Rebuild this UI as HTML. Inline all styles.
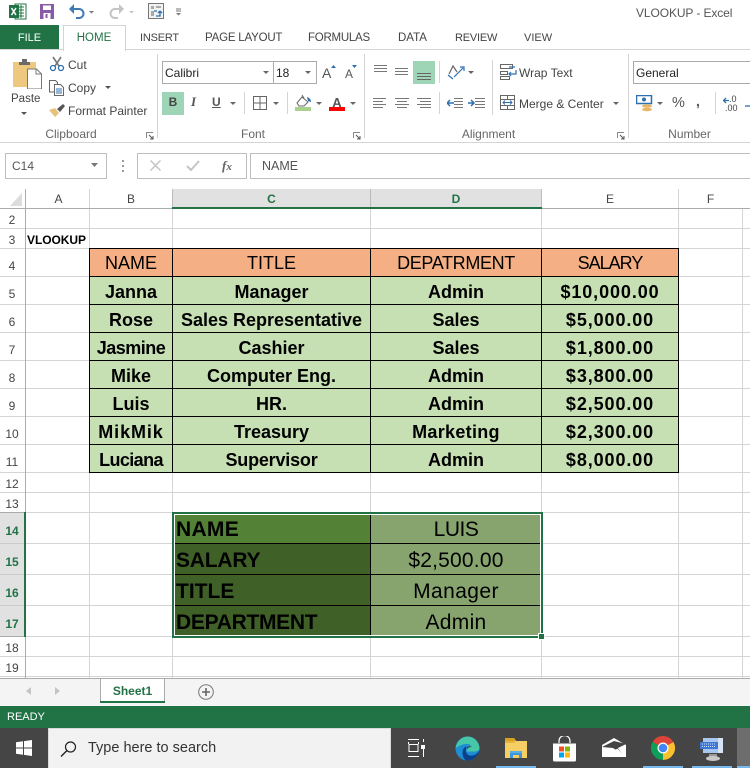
<!DOCTYPE html>
<html><head><meta charset="utf-8"><style>
html,body{margin:0;padding:0;background:#fff}
#p{position:relative;width:750px;height:768px;overflow:hidden;background:#fff;font-family:"Liberation Sans",sans-serif;color:#444;font-size:12px}
#p div,#p svg{position:absolute}
.t{white-space:nowrap;line-height:16px}
.c{text-align:center}
.h{background:#d4d4d4}
.b{background:#000}
.rn{left:0;width:24px;text-align:center;font-size:12px;color:#444;white-space:nowrap}
.d{font-weight:bold;font-size:18px;color:#000;text-align:center;white-space:nowrap;line-height:30px;height:28px}
.s{letter-spacing:.9px}
.hd{font-size:18px;color:#000;text-align:center;white-space:nowrap;line-height:28px;height:28px}
.sl{font-weight:bold;font-size:21px;color:#000;left:176px;white-space:nowrap;line-height:32px}
.sr{font-size:21px;color:#000;left:371px;width:170px;text-align:center;white-space:nowrap;line-height:32px}
.sep{width:1px;background:#d4d4d4}
</style></head><body><div id="p">

<!-- quick access -->
<svg style="left:9px;top:3px" width="18" height="17" viewBox="0 0 18 17"><rect x="6" y="1" width="11" height="15" fill="#fff" stroke="#217346"/><path d="M9 4h6M9 7h6M9 10h6M9 13h6M12 2v13" stroke="#217346"/><rect x="0" y="2" width="10" height="13" fill="#217346"/><path d="M2.500 5l4.500 7M7 5l-4.500 7" stroke="#fff" stroke-width="1.500"/></svg>
<svg style="left:40px;top:4px" width="14" height="15" viewBox="0 0 14 15"><rect width="14" height="15" fill="#8a5aa8"/><rect x="3" y="1.500" width="8" height="4.500" fill="#fff"/><rect x="3.500" y="9" width="7" height="6" fill="#fff"/><rect x="5.500" y="10" width="2" height="4" fill="#8a5aa8"/></svg>
<svg style="left:68px;top:3px" width="28" height="16" viewBox="0 0 28 16"><path d="M3 6h8a4.500 4.500 0 0 1 0 9H8" fill="none" stroke="#3f7ab5" stroke-width="2"/><path d="M1 6l5-5v10z" fill="#3f7ab5"/><path d="M21 8h5l-2.500 2.500z" fill="#777"/></svg>
<svg style="left:108px;top:3px" width="28" height="16" viewBox="0 0 28 16"><path d="M14 6H7a4.500 4.500 0 0 0 0 9h3" fill="none" stroke="#c4c4c4" stroke-width="2"/><path d="M16 6l-5-5v10z" fill="#c4c4c4"/><path d="M21 8h5l-2.500 2.500z" fill="#c4c4c4"/></svg>
<svg style="left:148px;top:3px" width="17" height="17" viewBox="0 0 17 17"><rect x=".5" y=".5" width="15" height="15" fill="#f2f2f2" stroke="#777"/><path d="M3 3h3v3H3zM8 3h5v2H8zM3 8h3v5H3z" fill="#aaa"/><path d="M8 13h4V9M12 8l-2 2M12 8l2 2M6 8h3" fill="none" stroke="#2d6fb0" stroke-width="1.300"/></svg>
<svg style="left:175px;top:8px" width="8" height="8" viewBox="0 0 8 8"><path d="M1 1h5M1 3h5" stroke="#777"/><path d="M1 5h5L3.500 7.500z" fill="#777"/></svg>
<div class="t" style="left:636px;top:5px;color:#555;letter-spacing:-.1px">VLOOKUP - Excel</div>

<!-- tabs -->
<div style="left:0;top:25px;width:59px;height:25px;background:#217346"></div>
<div class="t c" style="left:0;top:30px;width:59px;color:#fff;font-size:11px">FILE</div>
<div style="left:0;top:49px;width:750px;height:1px;background:#d4d4d4"></div>
<div style="left:63px;top:25px;width:61px;height:25px;background:#fff;border:1px solid #d4d4d4;border-bottom:0"></div>
<div class="t c" style="left:63px;top:30px;width:62px;color:#217346;font-size:11.500px">HOME</div>
<div class="t" style="left:140px;top:30px;font-size:11px;letter-spacing:-.2px">INSERT</div>
<div class="t" style="left:205px;top:30px;font-size:11.500px;letter-spacing:-.2px">PAGE LAYOUT</div>
<div class="t" style="left:308px;top:30px;font-size:11.500px;letter-spacing:-.25px">FORMULAS</div>
<div class="t" style="left:398px;top:30px;font-size:11.500px">DATA</div>
<div class="t" style="left:455px;top:30px;font-size:11px;letter-spacing:-.2px">REVIEW</div>
<div class="t" style="left:524px;top:30px;font-size:11px">VIEW</div>

<!-- ribbon -->
<div style="left:0;top:142px;width:750px;height:1px;background:#d4d4d4"></div>
<div class="sep" style="left:157px;top:54px;height:84px"></div>
<div class="sep" style="left:364px;top:54px;height:84px"></div>
<div class="sep" style="left:628px;top:54px;height:84px"></div>

<!-- clipboard -->
<svg style="left:12px;top:58px" width="30" height="31" viewBox="0 0 30 31"><path d="M1 4h23v25H1z" fill="#edc87e"/><path d="M7 4h11v3H7zM10 1h5v3h-5z" fill="#6a6a6a"/><path d="M15.500 11h9l5 5v15h-14z" fill="#fff" stroke="#777"/><path d="M24 11v5h5" fill="none" stroke="#777"/></svg>
<div class="t" style="left:11px;top:91px;color:#444;font-size:11.500px">Paste</div>
<svg style="left:21px;top:112px" width="7" height="5"><path d="M0 0h6L3 3z" fill="#555"/></svg>
<svg style="left:49px;top:56px" width="17" height="16" viewBox="0 0 17 16"><path d="M4 1l6 9M12 1L6 10" stroke="#777" stroke-width="1.600"/><circle cx="4" cy="12" r="2.500" fill="none" stroke="#2d6fb0" stroke-width="1.300"/><circle cx="12" cy="12" r="2.500" fill="none" stroke="#2d6fb0" stroke-width="1.300"/></svg>
<div class="t" style="left:68px;top:57px">Cut</div>
<svg style="left:49px;top:80px" width="16" height="16" viewBox="0 0 16 16"><path d="M.5.500h6l2 2V12H.500z" fill="#fff" stroke="#666"/><path d="M5.500 4.500h6l3 3v8h-9z" fill="#fff" stroke="#666"/><path d="M7 9h6M7 11h6M7 13h6" stroke="#2d6fb0"/></svg>
<div class="t" style="left:68px;top:80px">Copy</div>
<svg style="left:105px;top:86px" width="7" height="5"><path d="M0 0h6L3 3z" fill="#555"/></svg>
<svg style="left:49px;top:103px" width="17" height="15" viewBox="0 0 17 15"><path d="M0 7l6-2 4 5-4 4z" fill="#e8c27a"/><path d="M8 6l6-5 2 2-5 6z" fill="#555"/></svg>
<div class="t" style="left:68px;top:103px">Format Painter</div>
<div class="t c" style="left:0;top:126px;width:142px;color:#666">Clipboard</div>
<svg style="left:146px;top:132px" width="8" height="8" viewBox="0 0 8 8"><path d="M.5 6V.500H7" fill="none" stroke="#888"/><path d="M3 3l4 4M7 4v3H4" fill="none" stroke="#555"/></svg>

<!-- font -->
<div style="left:162px;top:61px;width:110px;height:21px;border:1px solid #ababab"></div>
<div style="left:273px;top:61px;width:42px;height:21px;border:1px solid #ababab"></div>
<div class="t" style="left:165px;top:65px;color:#222;font-size:12px">Calibri</div>
<div class="t" style="left:276px;top:65px;color:#222;font-size:12px">18</div>
<svg style="left:263px;top:71px" width="7" height="5"><path d="M0 0h6L3 3z" fill="#666"/></svg>
<svg style="left:305px;top:71px" width="7" height="5"><path d="M0 0h6L3 3z" fill="#666"/></svg>
<div class="t" style="left:322px;top:65px;font-size:14px;color:#555">A</div>
<svg style="left:331px;top:65px" width="5" height="3"><path d="M0 3h5L2.500 0z" fill="#2d6fb0"/></svg>
<div class="t" style="left:345px;top:66px;font-size:12px;color:#555">A</div>
<svg style="left:352px;top:65px" width="5" height="3"><path d="M0 0h5L2.500 3z" fill="#2d6fb0"/></svg>
<div style="left:162px;top:92px;width:22px;height:23px;background:#9fd5b7"></div>
<div class="t c" style="left:162px;top:94px;width:22px;font-weight:bold;font-size:12px;color:#444">B</div>
<div class="t" style="left:191px;top:94px;font-style:italic;font-family:'Liberation Serif',serif;font-weight:bold;font-size:13px;color:#555">I</div>
<div class="t" style="left:212px;top:94px;font-weight:bold;font-size:12px;color:#555;text-decoration:underline">U</div>
<svg style="left:230px;top:102px" width="7" height="5"><path d="M0 0h6L3 3z" fill="#666"/></svg>
<div class="sep" style="left:244px;top:92px;height:22px"></div>
<svg style="left:253px;top:96px" width="14" height="14"><path d="M.5.500h13v13H.500zM7 .5v13M.5 7h13" fill="none" stroke="#666"/></svg>
<svg style="left:273px;top:102px" width="7" height="5"><path d="M0 0h6L3 3z" fill="#666"/></svg>
<div class="sep" style="left:287px;top:92px;height:22px"></div>
<svg style="left:295px;top:94px" width="17" height="18" viewBox="0 0 17 18"><path d="M2 9l5-6 6 5-4 4H4z" fill="#fff" stroke="#666"/><path d="M7 1l2 3" stroke="#666"/><path d="M12 3c3 1 4 3 4 5l-3-1z" fill="#2d6fb0"/><rect y="13" width="16" height="4" fill="#a9d18e"/></svg>
<svg style="left:316px;top:102px" width="7" height="5"><path d="M0 0h6L3 3z" fill="#666"/></svg>
<div class="t c" style="left:329px;top:95px;width:16px;font-weight:bold;font-size:13px;color:#555">A</div>
<div style="left:329px;top:107px;width:16px;height:4px;background:#f00"></div>
<svg style="left:350px;top:102px" width="7" height="5"><path d="M0 0h6L3 3z" fill="#666"/></svg>
<div class="t c" style="left:158px;top:126px;width:190px;color:#666">Font</div>
<svg style="left:353px;top:132px" width="8" height="8" viewBox="0 0 8 8"><path d="M.5 6V.500H7" fill="none" stroke="#888"/><path d="M3 3l4 4M7 4v3H4" fill="none" stroke="#555"/></svg>

<!-- alignment -->
<svg style="left:374px;top:65px" width="38" height="12" viewBox="0 0 38 12"><path d="M0 .500h13M0 3.500h13M0 6.500h13M21 3.500h13M21 6.500h13M21 9.500h13" stroke="#777"/></svg>
<div style="left:413px;top:61px;width:22px;height:23px;background:#9fd5b7"></div>
<svg style="left:417px;top:72px" width="14" height="9"><path d="M0 1.500h14M0 4.500h14M0 7.500h14" stroke="#666"/></svg>
<div class="sep" style="left:439px;top:61px;height:22px"></div>
<svg style="left:447px;top:63px" width="18" height="18" viewBox="0 0 18 18"><path d="M2 11l4-8 4 6" fill="none" stroke="#666" stroke-width="1.200"/><path d="M1 12l5 4M7 14l9-9M13 4h4v4" fill="none" stroke="#2d6fb0" stroke-width="1.200"/></svg>
<svg style="left:468px;top:71px" width="7" height="5"><path d="M0 0h6L3 3z" fill="#666"/></svg>
<svg style="left:373px;top:97px" width="60" height="12" viewBox="0 0 60 12"><path d="M0 1.500h13M0 4.500h10M0 7.500h13M0 10.500h10M22 1.500h14M24 4.500h10M22 7.500h14M24 10.500h10M44 1.500h14M47 4.500h11M44 7.500h14M47 10.500h11" stroke="#777"/></svg>
<div class="sep" style="left:439px;top:92px;height:22px"></div>
<svg style="left:447px;top:97px" width="38" height="12" viewBox="0 0 38 12"><path d="M7 1.500h9M7 4.500h9M7 7.500h9M7 10.500h9M28 1.500h10M28 4.500h10M28 7.500h10M28 10.500h10" stroke="#777"/><path d="M0 6h7M3 3L0 6l3 3M21 6h6M24 3l3 3-3 3" fill="none" stroke="#2d6fb0" stroke-width="1.500"/></svg>
<div class="sep" style="left:492px;top:60px;height:55px"></div>
<svg style="left:500px;top:64px" width="17" height="16" viewBox="0 0 17 16"><path d="M.5.500h12v4H.500zM.5 7.500h7v3h-7zM.5 12.500h9v3h-9z" fill="#fff" stroke="#666"/><path d="M16 6v4h-7M11 8l-2 2 2 2M9 3h6" fill="none" stroke="#2d6fb0" stroke-width="1.200"/></svg>
<div class="t" style="left:519px;top:65px">Wrap Text</div>
<svg style="left:500px;top:95px" width="15" height="15" viewBox="0 0 15 15"><path d="M.5.500h14v14H.500zM.5 4.500h14M.5 10.500h14M7.500.5v4M7.500 10.500v4" fill="none" stroke="#666"/><path d="M3 7.500h9M5 5.500l-2 2 2 2M10 5.500l2 2-2 2" fill="none" stroke="#2d6fb0"/></svg>
<div class="t" style="left:519px;top:96px">Merge &amp; Center</div>
<svg style="left:613px;top:102px" width="7" height="5"><path d="M0 0h6L3 3z" fill="#666"/></svg>
<div class="t c" style="left:365px;top:126px;width:247px;color:#666">Alignment</div>
<svg style="left:617px;top:132px" width="8" height="8" viewBox="0 0 8 8"><path d="M.5 6V.500H7" fill="none" stroke="#888"/><path d="M3 3l4 4M7 4v3H4" fill="none" stroke="#555"/></svg>

<!-- number -->
<div style="left:633px;top:61px;width:130px;height:21px;border:1px solid #ababab"></div>
<div class="t" style="left:636px;top:65px;color:#222;font-size:12px">General</div>
<svg style="left:636px;top:95px" width="19" height="17" viewBox="0 0 19 17"><path d="M.5.500h15v8H.500z" fill="#fff" stroke="#2d6fb0" stroke-width="1.500"/><circle cx="8" cy="4.500" r="2" fill="#2d6fb0"/><ellipse cx="11" cy="11" rx="5" ry="1.800" fill="#e8b766"/><ellipse cx="11" cy="14.500" rx="5" ry="1.800" fill="#e8b766"/></svg>
<svg style="left:657px;top:102px" width="7" height="5"><path d="M0 0h6L3 3z" fill="#666"/></svg>
<div class="t" style="left:672px;top:95px;font-size:14.500px;color:#555">%</div>
<div class="t" style="left:696px;top:93px;font-size:14px;font-weight:bold;color:#555">,</div>
<div class="sep" style="left:715px;top:92px;height:22px"></div>
<svg style="left:723px;top:97px" width="6" height="7"><path d="M0 3.500h6M3 1L.5 3.500 3 6" fill="none" stroke="#2d6fb0" stroke-width="1.300"/></svg>
<div class="t" style="left:729px;top:94px;font-size:9px;line-height:10px;color:#444">.0</div>
<div class="t" style="left:725px;top:103px;font-size:9px;line-height:10px;color:#444">.00</div>
<svg style="left:745px;top:102px" width="5" height="8"><path d="M0 4h5" stroke="#2d6fb0" stroke-width="1.300"/></svg>
<div class="t c" style="left:629px;top:126px;width:121px;color:#666">Number</div>

<!-- formula bar -->
<div style="left:0;top:143px;width:750px;height:46px;background:#fff"></div>
<div style="left:5px;top:153px;width:100px;height:24px;border:1px solid #bdbdbd"></div>
<div class="t" style="left:12px;top:158px;color:#555;font-size:12px">C14</div>
<svg style="left:91px;top:163px" width="8" height="5"><path d="M0 0h7L3.500 4z" fill="#777"/></svg>
<svg style="left:121px;top:160px" width="3" height="12"><path d="M1 0h2v2H1zM1 5h2v2H1zM1 10h2v2H1z" fill="#999"/></svg>
<div style="left:137px;top:153px;width:108px;height:24px;border:1px solid #bdbdbd"></div>
<div style="left:250px;top:153px;width:510px;height:24px;border:1px solid #bdbdbd"></div>
<svg style="left:150px;top:160px" width="11" height="11"><path d="M.5.500l10 10M10.500.5l-10 10" stroke="#c4c4c4" stroke-width="1.500"/></svg>
<svg style="left:186px;top:160px" width="14" height="11"><path d="M1 6l4 4 8-9" fill="none" stroke="#c4c4c4" stroke-width="2"/></svg>
<div class="t" style="left:222px;top:158px;font-family:'Liberation Serif',serif;font-style:italic;font-weight:bold;font-size:13px;color:#666">f<span style="font-size:11px">x</span></div>
<div class="t" style="left:262px;top:158px;color:#555;font-size:12.500px">NAME</div>

<!-- grid -->
<div class="h" style="left:89px;top:189px;width:1px;height:489px"></div>
<div class="h" style="left:172px;top:189px;width:1px;height:489px"></div>
<div class="h" style="left:370px;top:189px;width:1px;height:489px"></div>
<div class="h" style="left:541px;top:189px;width:1px;height:489px"></div>
<div class="h" style="left:678px;top:189px;width:1px;height:489px"></div>
<div class="h" style="left:742px;top:189px;width:1px;height:489px"></div>
<div class="h" style="left:0;top:228px;width:750px;height:1px"></div>
<div class="h" style="left:0;top:248px;width:750px;height:1px"></div>
<div class="h" style="left:0;top:276px;width:750px;height:1px"></div>
<div class="h" style="left:0;top:304px;width:750px;height:1px"></div>
<div class="h" style="left:0;top:332px;width:750px;height:1px"></div>
<div class="h" style="left:0;top:360px;width:750px;height:1px"></div>
<div class="h" style="left:0;top:388px;width:750px;height:1px"></div>
<div class="h" style="left:0;top:416px;width:750px;height:1px"></div>
<div class="h" style="left:0;top:444px;width:750px;height:1px"></div>
<div class="h" style="left:0;top:472px;width:750px;height:1px"></div>
<div class="h" style="left:0;top:492px;width:750px;height:1px"></div>
<div class="h" style="left:0;top:512px;width:750px;height:1px"></div>
<div class="h" style="left:0;top:543px;width:750px;height:1px"></div>
<div class="h" style="left:0;top:574px;width:750px;height:1px"></div>
<div class="h" style="left:0;top:605px;width:750px;height:1px"></div>
<div class="h" style="left:0;top:636px;width:750px;height:1px"></div>
<div class="h" style="left:0;top:656px;width:750px;height:1px"></div>
<div class="h" style="left:0;top:676px;width:750px;height:1px"></div>

<!-- col headers -->
<div style="left:0;top:189px;width:750px;height:19px;background:#fff"></div>
<div style="left:0;top:208px;width:750px;height:1px;background:#ababab"></div>
<div style="left:172px;top:189px;width:369px;height:18px;background:#e1e1e1"></div>
<div style="left:172px;top:207px;width:370px;height:2px;background:#217346"></div>
<div class="h" style="left:25px;top:189px;width:1px;height:20px"></div>
<div class="h" style="left:89px;top:189px;width:1px;height:19px"></div>
<div class="h" style="left:172px;top:189px;width:1px;height:18px;background:#bbb"></div>
<div class="h" style="left:370px;top:189px;width:1px;height:18px;background:#bbb"></div>
<div class="h" style="left:541px;top:189px;width:1px;height:18px;background:#bbb"></div>
<div class="h" style="left:678px;top:189px;width:1px;height:19px"></div>
<svg style="left:10px;top:193px" width="13" height="13"><path d="M12 0v13H0z" fill="#dcdcdc"/></svg>
<div class="t c" style="left:27px;top:191px;width:63px">A</div>
<div class="t c" style="left:90px;top:191px;width:82px">B</div>
<div class="t c" style="left:173px;top:191px;width:197px;color:#217346;font-weight:bold">C</div>
<div class="t c" style="left:371px;top:191px;width:170px;color:#217346;font-weight:bold">D</div>
<div class="t c" style="left:542px;top:191px;width:136px">E</div>
<div class="t c" style="left:679px;top:191px;width:63px">F</div>

<!-- row headers -->
<div style="left:0;top:209px;width:25px;height:469px;background:#fff"></div>
<div style="left:0;top:513px;width:24px;height:124px;background:#e1e1e1"></div>
<div style="left:25px;top:189px;width:1px;height:489px;background:#ababab"></div>
<div style="left:24px;top:512px;width:2px;height:125px;background:#217346"></div>
<div class="h" style="left:0;top:228px;width:25px;height:1px"></div>
<div class="h" style="left:0;top:248px;width:25px;height:1px"></div>
<div class="h" style="left:0;top:276px;width:25px;height:1px"></div>
<div class="h" style="left:0;top:304px;width:25px;height:1px"></div>
<div class="h" style="left:0;top:332px;width:25px;height:1px"></div>
<div class="h" style="left:0;top:360px;width:25px;height:1px"></div>
<div class="h" style="left:0;top:388px;width:25px;height:1px"></div>
<div class="h" style="left:0;top:416px;width:25px;height:1px"></div>
<div class="h" style="left:0;top:444px;width:25px;height:1px"></div>
<div class="h" style="left:0;top:472px;width:25px;height:1px"></div>
<div class="h" style="left:0;top:492px;width:25px;height:1px"></div>
<div class="h" style="left:0;top:512px;width:24px;height:1px;background:#ababab"></div>
<div class="h" style="left:0;top:543px;width:24px;height:1px;background:#ccc"></div>
<div class="h" style="left:0;top:574px;width:24px;height:1px;background:#ccc"></div>
<div class="h" style="left:0;top:605px;width:24px;height:1px;background:#ccc"></div>
<div class="h" style="left:0;top:636px;width:24px;height:1px;background:#ababab"></div>
<div class="h" style="left:0;top:656px;width:25px;height:1px"></div>
<div class="h" style="left:0;top:676px;width:25px;height:1px"></div>
<div class="t rn" style="top:212px">2</div>
<div class="t rn" style="top:232px">3</div>
<div class="t rn" style="top:258px">4</div>
<div class="t rn" style="top:286px">5</div>
<div class="t rn" style="top:314px">6</div>
<div class="t rn" style="top:342px">7</div>
<div class="t rn" style="top:370px">8</div>
<div class="t rn" style="top:398px">9</div>
<div class="t rn" style="top:426px">10</div>
<div class="t rn" style="top:454px">11</div>
<div class="t rn" style="top:476px">12</div>
<div class="t rn" style="top:496px">13</div>
<div class="t rn" style="top:523px;color:#217346;font-weight:bold">14</div>
<div class="t rn" style="top:554px;color:#217346;font-weight:bold">15</div>
<div class="t rn" style="top:585px;color:#217346;font-weight:bold">16</div>
<div class="t rn" style="top:616px;color:#217346;font-weight:bold">17</div>
<div class="t rn" style="top:640px">18</div>
<div class="t rn" style="top:660px">19</div>

<div class="t" style="left:27px;top:232px;font-weight:bold;font-size:12px;color:#000;letter-spacing:-.05px">VLOOKUP</div>

<!-- main table -->
<div style="left:89px;top:248px;width:590px;height:28px;background:#f4b084"></div>
<div style="left:89px;top:276px;width:590px;height:197px;background:#c6e0b4"></div>
<div class="b" style="left:89px;top:248px;width:590px;height:1px"></div>
<div class="b" style="left:89px;top:276px;width:590px;height:1px"></div>
<div class="b" style="left:89px;top:304px;width:590px;height:1px"></div>
<div class="b" style="left:89px;top:332px;width:590px;height:1px"></div>
<div class="b" style="left:89px;top:360px;width:590px;height:1px"></div>
<div class="b" style="left:89px;top:388px;width:590px;height:1px"></div>
<div class="b" style="left:89px;top:416px;width:590px;height:1px"></div>
<div class="b" style="left:89px;top:444px;width:590px;height:1px"></div>
<div class="b" style="left:89px;top:472px;width:590px;height:1px"></div>
<div class="b" style="left:89px;top:248px;width:1px;height:225px"></div>
<div class="b" style="left:172px;top:248px;width:1px;height:225px"></div>
<div class="b" style="left:370px;top:248px;width:1px;height:225px"></div>
<div class="b" style="left:541px;top:248px;width:1px;height:225px"></div>
<div class="b" style="left:678px;top:248px;width:1px;height:225px"></div>

<div class="hd" style="left:90px;top:249px;width:82px">NAME</div>
<div class="hd" style="left:173px;top:249px;width:197px">TITLE</div>
<div class="hd" style="left:371px;top:249px;width:170px;letter-spacing:-.35px">DEPATRMENT</div>
<div class="hd" style="left:542px;top:249px;width:136px;letter-spacing:-1px">SALARY</div>

<div class="d" style="left:90px;top:277px;width:82px">Janna</div>
<div class="d" style="left:173px;top:277px;width:197px">Manager</div>
<div class="d" style="left:371px;top:277px;width:170px">Admin</div>
<div class="d s" style="left:542px;top:277px;width:136px">$10,000.00</div>

<div class="d" style="left:90px;top:305px;width:82px">Rose</div>
<div class="d" style="left:173px;top:305px;width:197px">Sales Representative</div>
<div class="d" style="left:371px;top:305px;width:170px">Sales</div>
<div class="d s" style="left:542px;top:305px;width:136px">$5,000.00</div>

<div class="d" style="left:90px;top:333px;width:82px;letter-spacing:-.5px">Jasmine</div>
<div class="d" style="left:173px;top:333px;width:197px">Cashier</div>
<div class="d" style="left:371px;top:333px;width:170px">Sales</div>
<div class="d s" style="left:542px;top:333px;width:136px">$1,800.00</div>

<div class="d" style="left:90px;top:361px;width:82px">Mike</div>
<div class="d" style="left:173px;top:361px;width:197px">Computer Eng.</div>
<div class="d" style="left:371px;top:361px;width:170px">Admin</div>
<div class="d s" style="left:542px;top:361px;width:136px">$3,800.00</div>

<div class="d" style="left:90px;top:389px;width:82px">Luis</div>
<div class="d" style="left:173px;top:389px;width:197px">HR.</div>
<div class="d" style="left:371px;top:389px;width:170px">Admin</div>
<div class="d s" style="left:542px;top:389px;width:136px">$2,500.00</div>

<div class="d" style="left:90px;top:417px;width:82px;letter-spacing:.9px">MikMik</div>
<div class="d" style="left:173px;top:417px;width:197px">Treasury</div>
<div class="d" style="left:371px;top:417px;width:170px;letter-spacing:.3px">Marketing</div>
<div class="d s" style="left:542px;top:417px;width:136px">$2,300.00</div>

<div class="d" style="left:90px;top:445px;width:82px;letter-spacing:-.6px">Luciana</div>
<div class="d" style="left:173px;top:445px;width:197px;letter-spacing:-.2px">Supervisor</div>
<div class="d" style="left:371px;top:445px;width:170px">Admin</div>
<div class="d s" style="left:542px;top:445px;width:136px">$8,000.00</div>

<!-- lookup table -->
<div style="left:172px;top:512px;width:198px;height:31px;background:#538135"></div>
<div style="left:172px;top:543px;width:198px;height:93px;background:#3f6128"></div>
<div style="left:371px;top:512px;width:171px;height:124px;background:#87a46f"></div>
<div class="b" style="left:172px;top:543px;width:370px;height:1px"></div>
<div class="b" style="left:172px;top:574px;width:370px;height:1px"></div>
<div class="b" style="left:172px;top:605px;width:370px;height:1px"></div>
<div class="b" style="left:370px;top:512px;width:1px;height:125px"></div>
<div class="sl" style="top:514px;letter-spacing:.3px">NAME</div>
<div class="sl" style="top:545px;letter-spacing:-.2px">SALARY</div>
<div class="sl" style="top:576px">TITLE</div>
<div class="sl" style="top:607px;letter-spacing:-.3px">DEPARTMENT</div>
<div class="sr" style="top:514px;letter-spacing:-.5px">LUIS</div>
<div class="sr" style="top:545px;letter-spacing:.2px">$2,500.00</div>
<div class="sr" style="top:576px;letter-spacing:.4px">Manager</div>
<div class="sr" style="top:607px;letter-spacing:.3px">Admin</div>
<div style="left:172px;top:512px;width:367px;height:122px;border:2px solid #217346;outline:1px solid #fff;outline-offset:-3px"></div>
<div style="left:538px;top:633px;width:5px;height:5px;background:#217346;border:1px solid #fff"></div>

<!-- sheet bar -->
<div style="left:0;top:678px;width:750px;height:28px;background:#f4f4f4;border-top:1px solid #ababab;box-sizing:border-box"></div>
<svg style="left:26px;top:687px" width="6" height="9"><path d="M5 0v8L0 4z" fill="#c4c4c4"/></svg>
<svg style="left:55px;top:687px" width="6" height="9"><path d="M0 0v8l5-4z" fill="#c4c4c4"/></svg>
<div style="left:100px;top:678px;width:63px;height:23px;background:#fff;border:1px solid #ababab;border-bottom:0"></div>
<div style="left:100px;top:701px;width:65px;height:2px;background:#217346"></div>
<div class="t c" style="left:100px;top:683px;width:65px;color:#217346;font-weight:bold;font-size:12px">Sheet1</div>
<svg style="left:198px;top:684px" width="16" height="16" viewBox="0 0 16 16"><circle cx="8" cy="8" r="7.300" fill="none" stroke="#777"/><path d="M8 4v8M4 8h8" stroke="#666" stroke-width="1.600"/></svg>

<!-- status -->
<div style="left:0;top:706px;width:750px;height:22px;background:#217346"></div>
<div class="t" style="left:7px;top:709px;color:#fff;font-size:11px">READY</div>

<!-- taskbar -->
<div style="left:0;top:728px;width:750px;height:40px;background:#454545"></div>
<svg style="left:16px;top:740px" width="16" height="16"><path d="M0 2.300l7-1v6.200H0zM8 1.100l8-1.100v7.500H8zM0 8.500h7v6.200l-7-1zM8 8.500h8V16l-8-1.100z" fill="#fff"/></svg>
<div style="left:48px;top:728px;width:341px;height:40px;background:#f2f2f2;border:1px solid #d8d8d8;border-bottom:0"></div>
<svg style="left:60px;top:741px" width="17" height="16" viewBox="0 0 17 16"><circle cx="10.500" cy="6" r="5" fill="none" stroke="#222" stroke-width="1.200"/><path d="M7 9.500l-6 6" stroke="#222" stroke-width="1.400"/></svg>
<div class="t" style="left:88px;top:740px;color:#333;font-size:14.500px">Type here to search</div>

<svg style="left:408px;top:739px" width="17" height="18" viewBox="0 0 17 18"><path d="M0 .5h11M0 17.500h11M1 5.500h9v7H1zM.5 3v2M10.500 3v2M15.500 0v3M15.500 10v8" fill="none" stroke="#fff"/><rect x="13" y="6" width="4" height="4" fill="#fff"/></svg>
<svg style="left:455px;top:736px" width="25" height="25" viewBox="0 0 25 25"><circle cx="12.500" cy="12.500" r="12" fill="#1e8ed4"/><path d="M.5 12.500C2 4 8 .5 12.500.5c7 0 12 6 12 12 0 2-3 3-6 3h-7c0-4 4-5 4-6-1-3-9-2-15.500 3z" fill="#46c7a8"/><path d="M24.500 14c-1 6-6 10.500-12 10.500-4 0-5-5-5-8 0-3 2-6 4-6-1 3-1 7 2 8.500s8 .5 11-5z" fill="#0c3f8a"/><path d="M12 11c2-1 4-1 5 0-3 0-5 1-5 4z" fill="#454545"/></svg>
<svg style="left:505px;top:738px" width="22" height="21" viewBox="0 0 22 21"><path d="M0 0h9l2 3h11v17H0z" fill="#f5cf63"/><path d="M0 0h9l1 3H0z" fill="#d9a11e"/><path d="M0 3h10v2H0z" fill="#e6b53c"/><path d="M5 14h12v6h-3v-3H8v3H5z" fill="#3f95d9"/><path d="M8 17h6v3H8z" fill="#f5cf63"/><path d="M5 13h12v2H5z" fill="#57aee8"/></svg>
<svg style="left:553px;top:736px" width="23" height="26" viewBox="0 0 23 26"><path d="M6 7V5a5 5 0 0 1 11 0v2" fill="none" stroke="#fff" stroke-width="1.200"/><path d="M0 7.500h23V24a1.500 1.500 0 0 1-1.500 1.500h-20A1.500 1.500 0 0 1 0 24z" fill="#fff"/><rect x="6" y="10.500" width="5" height="5" fill="#f25022"/><rect x="12" y="10.500" width="5" height="5" fill="#7fba00"/><rect x="6" y="16.500" width="5" height="5" fill="#00a4ef"/><rect x="12" y="16.500" width="5" height="5" fill="#ffb900"/></svg>
<svg style="left:602px;top:738px" width="24" height="20" viewBox="0 0 24 20"><path d="M0 7L12 0l12 7v12H0z" fill="#fff"/><path d="M0 9l12-6 12 3-8 4 4 6-9-6z" fill="#454545"/><path d="M0 9l9 4 9-3-2 1 5 6z" fill="#fff"/></svg>
<svg style="left:651px;top:736px" width="24" height="24" viewBox="0 0 24 24"><path d="M12 12L1.600 6A12 12 0 0 1 22.400 6z" fill="#db4437"/><path d="M12 12l10.400-6A12 12 0 0 1 12 24z" fill="#fbc02d"/><path d="M12 12v12A12 12 0 0 1 1.600 6z" fill="#0f9d58"/><circle cx="12" cy="12" r="5.500" fill="#fff"/><circle cx="12" cy="12" r="4.300" fill="#4285f4"/></svg>
<svg style="left:700px;top:736px" width="24" height="25" viewBox="0 0 24 25"><rect x="3" y="2" width="20" height="15" fill="#a9c7ee"/><path d="M18 2h5v15h-5z" fill="#d6e4f5"/><rect x="0" y="6" width="18" height="7" fill="#3b78d6"/><path d="M2 8h14M2 10.500h14" stroke="#cfe0f5" stroke-dasharray="1 1"/><path d="M9 18h8v3H9z" fill="#999"/><ellipse cx="13" cy="22.500" rx="7" ry="2.500" fill="#c9c9c9"/></svg>

<div style="left:496px;top:766px;width:40px;height:2px;background:#76b9ed"></div>
<div style="left:643px;top:766px;width:40px;height:2px;background:#76b9ed"></div>
<div style="left:692px;top:766px;width:40px;height:2px;background:#76b9ed"></div>
<div style="left:737px;top:728px;width:13px;height:40px;background:#6d6d6d"></div>
<div style="left:737px;top:766px;width:13px;height:2px;background:#76b9ed"></div>
</div></body></html>
